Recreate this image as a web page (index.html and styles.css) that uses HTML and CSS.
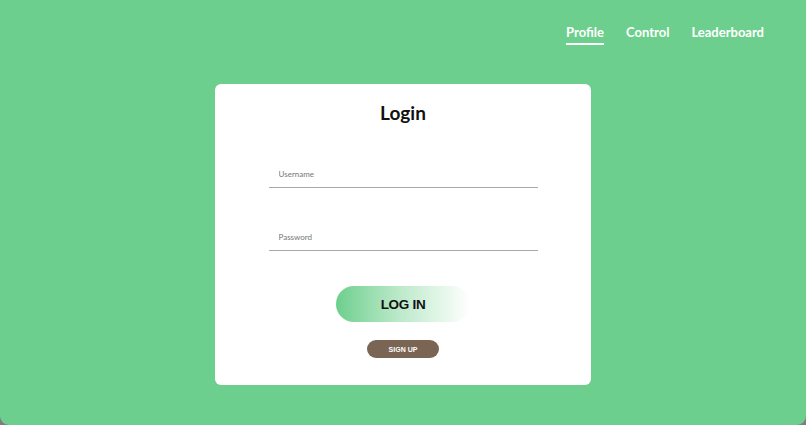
FILE: index.html
```html
<!DOCTYPE html>
<html lang="en">
<head>
<meta charset="utf-8">
<title>Login</title>
<link rel="stylesheet" href="styles.css">
</head>
<body>
<div class="page">
  <header class="topbar">
    <nav class="nav">
      <a class="nav-link active" href="#">Profile</a>
      <a class="nav-link" href="#">Control</a>
      <a class="nav-link" href="#">Leaderboard</a>
    </nav>
  </header>
  <main class="main">
    <form class="card">
      <h1 class="title">Login</h1>
      <div class="field"><input class="input" type="text" placeholder="Username"></div>
      <div class="field"><input class="input" type="password" placeholder="Password"></div>
      <button class="btn-login" type="button">LOG IN</button>
      <button class="btn-signup" type="button">SIGN UP</button>
    </form>
  </main>
</div>
</body>
</html>
```
FILE: styles.css
```css
html {
  background: #7d7d7d;
}
body {
  margin: 0;
  font-family: Lato, "Noto Sans", sans-serif;
}
.page {
  background: #6dcf8d;
  height: 425px;
  border-radius: 0 0 9px 9px;
  overflow: hidden;
}
.topbar {
  display: flex;
  justify-content: flex-end;
  padding: 24px 42px 0 0;
}
.nav {
  display: flex;
  gap: 22px;
}
.nav-link {
  color: #fff;
  font-weight: 700;
  font-size: 13px;
  text-decoration: none;
  padding-bottom: 3px;
  border-bottom: 2px solid transparent;
  line-height: 16px;
}
.nav-link.active {
  border-bottom-color: #fff;
}
.main {
  display: flex;
  justify-content: center;
  padding-top: 39px;
}
.card {
  width: 376px;
  height: 301px;
  box-sizing: border-box;
  background: #fff;
  border-radius: 6px;
  display: flex;
  flex-direction: column;
  align-items: center;
  padding-top: 17px;
}
.title {
  margin: 0;
  font-size: 19px;
  font-weight: 700;
  color: #111;
  line-height: 24px;
}
.field {
  width: 269px;
  margin-top: 35px;
}
.input {
  width: 100%;
  box-sizing: border-box;
  height: 28px;
  border: 0;
  border-bottom: 1px solid #a9a9a9;
  padding: 0 0 0 10px;
  font-family: Lato, "Noto Sans", sans-serif;
  font-size: 8px;
  background: transparent;
  outline: none;
}
.input::placeholder {
  color: #767676;
}
.btn-login {
  margin-top: 35px;
  width: 134px;
  height: 36px;
  border: 0;
  border-radius: 18px;
  background: linear-gradient(90deg, #6dcf8d 0%, #b9e8c7 45%, #ffffff 100%);
  font-family: "Liberation Sans", Arial, sans-serif;
  font-weight: 700;
  font-size: 13.5px;
  letter-spacing: -0.3px;
  color: #111;
  padding: 0;
}
.btn-signup {
  margin-top: 18px;
  width: 72px;
  height: 18px;
  border: 0;
  border-radius: 9px;
  background: #7a6454;
  color: #fff;
  font-family: "Liberation Sans", Arial, sans-serif;
  font-weight: 700;
  font-size: 7px;
  padding: 0;
}
```
